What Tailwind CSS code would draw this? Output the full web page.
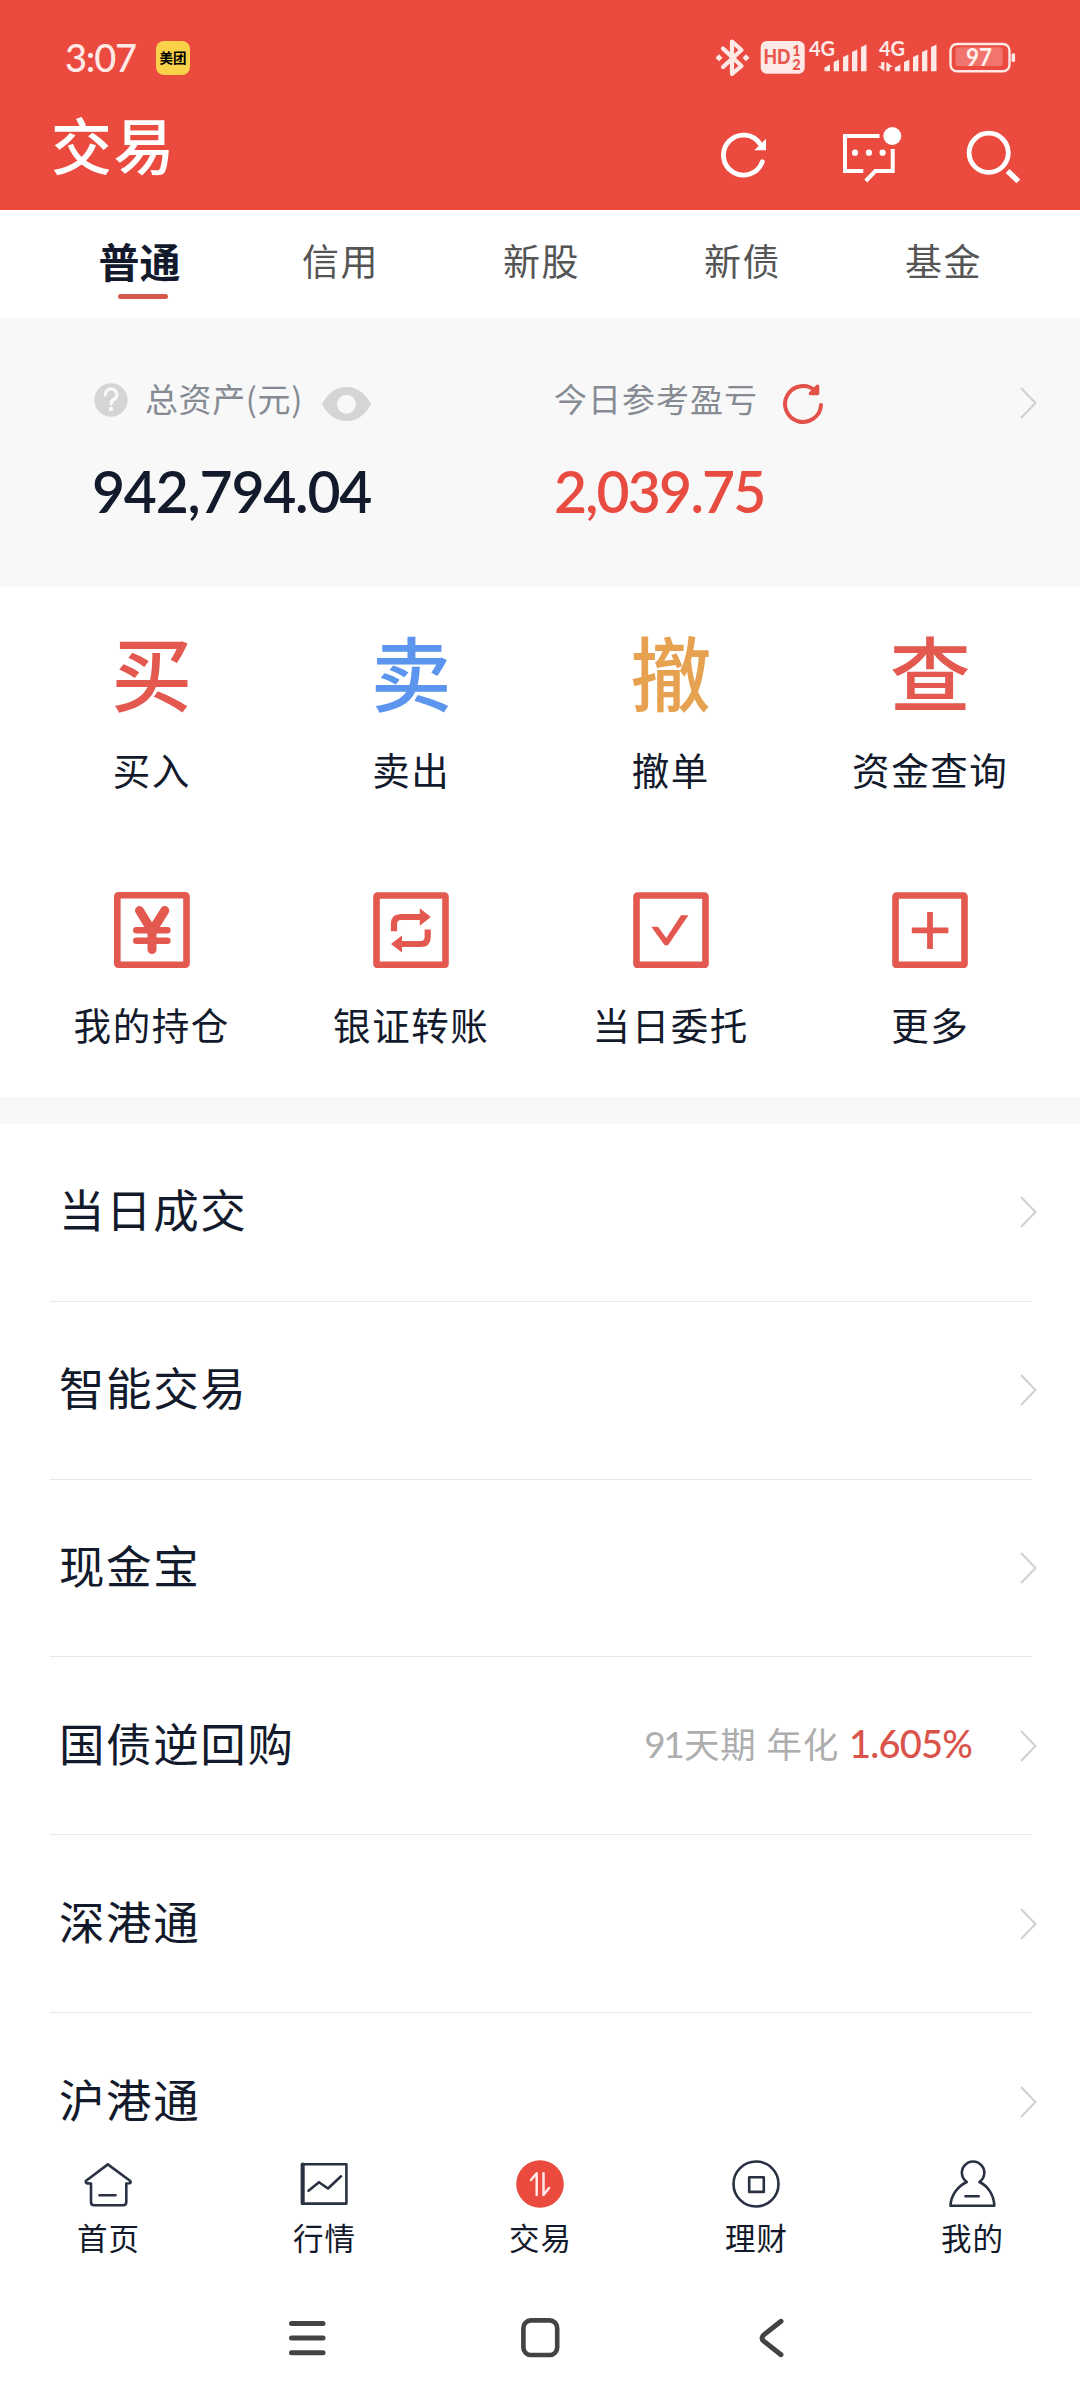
<!DOCTYPE html>
<html lang="zh-CN">
<head>
<meta charset="utf-8">
<title>交易</title>
<script src="https://cdn.jsdelivr.net/npm/@tailwindcss/browser@4"></script>
</head>
<body class="w-[1080px] h-[2400px] overflow-hidden bg-white text-[#121a2b] font-['Noto_Sans_CJK_SC',sans-serif] flex flex-col">

<header class="h-[210px] shrink-0 bg-[#eb4a3f] text-white flex flex-col">
  <!-- status bar -->
  <div class="h-[100px] shrink-0 flex">
    <div class="w-[156px] pl-[65px] pt-[37px] text-[38px] leading-[40px] font-[Lato,sans-serif] font-medium tracking-[-1.2px] text-[#fee9e7]">3:07</div>
    <div class="mt-[41px] w-[34px] h-[34px] rounded-[8px] bg-[#f9d24a] text-black text-[13.5px] font-bold flex items-center justify-center leading-none pb-px">美团</div>
    <svg class="ml-[520px] w-[370px] h-[100px] shrink-0" viewBox="710 0 370 100" fill="none">
      <g stroke="#fee9e7" stroke-width="4.2" stroke-linejoin="round" stroke-linecap="round">
        <path d="M723 48.5 L741.5 66 L732 74 V41.5 L741.5 50 L723 67"/>
      </g>
      <g fill="#fee9e7">
        <path d="M719 54.3 l3.5 3.5 l-3.5 3.5 l-3.5 -3.5z M746 54.3 l3.5 3.5 l-3.5 3.5 l-3.5 -3.5z"/>
        <rect x="760.7" y="41" width="44" height="32.8" rx="6"/>
        <path d="M824.5 71.3 V67.5 L830 64.5 V71.3z M833.7 71.3 V62 L839 59.5 V71.3z M843 71.3 V57 L848.3 54.5 V71.3z M852 71.3 V52 L857.3 49.5 V71.3z M861 71.3 V47 L866.5 44.5 V71.3z"/>
        <path d="M894.9 71.3 V67.5 L900.4 64.5 V71.3z M904 71.3 V62 L909.3 59.5 V71.3z M913 71.3 V57 L918.3 54.5 V71.3z M922 71.3 V52 L927.3 49.5 V71.3z M931 71.3 V47 L936.5 44.5 V71.3z"/>
        <path d="M881.2 62 h3.2 v9.3 l-6.6 -5 h3.4z M886.4 71.3 v-9.3 l6.6 5 h-3.4 v4.3z"/>
        <rect x="1011.5" y="53.3" width="3.6" height="8.6" rx="1.5"/>
      </g>
      <rect x="950.5" y="44" width="59" height="27.2" rx="6.5" stroke="#fee9e7" stroke-width="2.4"/>
      <rect x="955.6" y="47.3" width="47" height="18.8" rx="2.5" fill="#f1746d"/>
      <g font-family="Lato, sans-serif" font-weight="700">
        <text x="763.5" y="64" font-size="20.5" font-weight="900" textLength="27" lengthAdjust="spacingAndGlyphs" fill="#e9564c">HD</text>
        <text x="792.3" y="55.6" font-size="14.5" font-weight="900" fill="#e9564c">1</text>
        <text x="792.3" y="70" font-size="14.5" font-weight="900" fill="#e9564c">2</text>
        <text x="809" y="56" font-size="20.5" textLength="26" lengthAdjust="spacingAndGlyphs" fill="#fee9e7">4G</text>
        <text x="879" y="56" font-size="20.5" textLength="26" lengthAdjust="spacingAndGlyphs" fill="#fee9e7">4G</text>
        <text x="966" y="66" font-size="24" textLength="26" lengthAdjust="spacingAndGlyphs" fill="#fff0ee">97</text>
      </g>
    </svg>
  </div>
  <!-- title bar -->
  <div class="h-[110px] flex">
    <h1 class="w-[710px] pl-[51px] pt-[9px] text-[61px] leading-[70px] tracking-[1.5px] font-medium">交易</h1>
    <svg class="w-[370px] h-[110px] shrink-0" viewBox="710 100 370 110" fill="none" stroke="#fff">
      <path d="M762.3 161.8 A20 20 0 1 1 760.3 144.3" stroke-width="4.8" stroke-linecap="round"/>
      <path d="M766 138.8 V150.3 H754.3z" fill="#fff" stroke="none"/>
      <path d="M879.5 136 H845 V171 H863.3 M892.7 149 V171 H875.3 L865.8 181" stroke-width="4"/>
      <g fill="#fff" stroke="none">
        <circle cx="855" cy="152.7" r="3.1"/><circle cx="868.9" cy="152.7" r="3.1"/><circle cx="882.6" cy="152.7" r="3.1"/>
        <circle cx="892.3" cy="136" r="9"/>
      </g>
      <circle cx="988.7" cy="152.8" r="19.6" stroke-width="4.8"/>
      <path d="M1007.6 171 L1018.4 181.4" stroke-width="5.4"/>
    </svg>
  </div>
</header>

<!-- account type tabs -->
<nav class="h-[108px] shrink-0 pl-[39px] flex text-[37px] leading-[56px] text-[#555] text-center">
  <div class="w-[201px] pt-[22px] text-[41px] font-bold text-[#121a2b] flex flex-col items-center">普通<span class="w-[50px] h-[5px] mt-[6px] ml-[7px] rounded-full bg-[#d4584c]"></span></div>
  <div class="w-[201px] pt-[22px] tracking-[1.6px]">信用</div>
  <div class="w-[201px] pt-[22px] tracking-[1.6px]">新股</div>
  <div class="w-[201px] pt-[22px] tracking-[1.6px]">新债</div>
  <div class="w-[201px] pt-[22px] tracking-[1.6px]">基金</div>
</nav>

<!-- asset summary -->
<section class="h-[269px] shrink-0 bg-[#f8f8f8] flex pt-[56px]">
  <div class="w-[460px] pl-[94px]">
    <div class="flex items-center h-[52px]">
      <svg class="w-[34px] h-[34px]" viewBox="94 383 34 34"><circle cx="111" cy="400" r="16.7" fill="#d5d5d5"/><path d="M105.3 394.8 A5.8 5.6 0 1 1 113.6 399.6 Q111 401 111 403.8" fill="none" stroke="#f8f8f8" stroke-width="3.4" stroke-linecap="round"/><circle cx="111" cy="409" r="2.3" fill="#f8f8f8"/></svg>
      <span class="ml-[17px] -mt-[4px] w-[177px] text-[33px] leading-[50px] tracking-[0.6px] text-[#868b93] whitespace-nowrap">总资产(元)</span>
      <svg class="mt-[8px] w-[49px] h-[35px] shrink-0" viewBox="322 387 49 35"><path fill-rule="evenodd" fill="#d5d5d5" d="M322 404.2 Q331 387 346.5 387 Q362 387 371 404.2 Q362 421 346.5 421 Q331 421 322 404.2z M356 404.3 a9.5 9.5 0 1 0 -19 0 a9.5 9.5 0 1 0 19 0z"/></svg>
    </div>
    <div class="mt-[30px] -ml-[2px] text-[57px] leading-[70px] font-[Lato,sans-serif] font-semibold tracking-[-1.2px]">942,794.04</div>
  </div>
  <div class="w-[560px] pl-[94px]">
    <div class="flex items-center h-[52px]">
      <span class="w-[227px] -mt-[4px] text-[33px] leading-[50px] tracking-[1px] text-[#868b93] whitespace-nowrap">今日参考盈亏</span>
      <svg class="mt-[6px] w-[44px] h-[44px] shrink-0" viewBox="781 381 44 44" fill="none" stroke="#e2524a" stroke-linecap="round" stroke-linejoin="round"><path d="M821 405 A18 18 0 1 1 815.5 391" stroke-width="4"/><path d="M817.5 386.3 V393.5 H810.5z" stroke-width="3.6" fill="#e2524a"/></svg>
    </div>
    <div class="mt-[30px] text-[57px] leading-[70px] font-[Lato,sans-serif] font-semibold tracking-[-1.8px] text-[#e84c41]">2,039.75</div>
  </div>
  <svg class="mt-[13px] w-[18px] h-[32px]" viewBox="0 0 18 32" fill="none" stroke="#d0d0d0" stroke-width="2"><path d="M1 1 L15.5 16 L1 31"/></svg>
</section>

<!-- quick actions -->
<section class="h-[510px] shrink-0 pl-[22px] pr-[20px] grid grid-cols-4 grid-rows-[255px_255px] text-center text-[37.5px] leading-[50px]">
  <div><div class="h-[154px] pt-[36px] text-[81px] leading-[94px] font-medium text-[#e3584f]">买</div><div class="pt-[3px] tracking-[1.6px]">买入</div></div>
  <div><div class="h-[154px] pt-[36px] text-[81px] leading-[94px] font-medium text-[#5b95ee]">卖</div><div class="pt-[3px] tracking-[1.6px]">卖出</div></div>
  <div><div class="h-[154px] pt-[36px] text-[81px] leading-[94px] font-medium text-[#e6a250]">撤</div><div class="pt-[3px] tracking-[1.6px]">撤单</div></div>
  <div><div class="h-[154px] pt-[36px] text-[81px] leading-[94px] font-medium text-[#e3584f]">查</div><div class="pt-[3px] tracking-[1.6px]">资金查询</div></div>
  <div class="flex flex-col items-center pt-[50px]">
    <svg class="w-[76px] h-[76px]" viewBox="114 892 76 76" fill="none" stroke="#e3584f" stroke-linecap="round"><rect x="117.3" y="895.3" width="69.2" height="69.4" rx="1" stroke-width="6.6"/><path d="M139.5 910.5 L152 931 L164.8 910.5 M152 930 V949.5" stroke-width="9" stroke-linejoin="round"/><path d="M136.3 930.3 H167.3 M136.3 940.7 H167.3" stroke-width="6.6"/></svg>
    <div class="mt-[31px] tracking-[1.6px]">我的持仓</div>
  </div>
  <div class="flex flex-col items-center pt-[50px]">
    <svg class="w-[76px] h-[76px]" viewBox="373 892 76 76" fill="none" stroke="#e3584f"><rect x="376.5" y="895.5" width="69" height="69.4" rx="1" stroke-width="6.6"/><path d="M394 931.3 V924 Q394 917 401 917 H421 M427.7 929.5 V937 Q427.7 944 420.7 944 H401" stroke-width="6.2"/><path d="M419.8 908.3 L430.8 917 L419.8 925.7z M402 935.6 L391 944 L402 952.4z" fill="#e3584f" stroke="none"/></svg>
    <div class="mt-[31px] tracking-[1.6px]">银证转账</div>
  </div>
  <div class="flex flex-col items-center pt-[50px]">
    <svg class="w-[76px] h-[76px]" viewBox="632.5 892 76 76" fill="none" stroke="#e3584f"><rect x="636" y="895.5" width="69" height="69.4" rx="1" stroke-width="6.6"/><path d="M650.8 926.8 H657.5 L665.8 938 L680.5 915.2 H688 L668 944.6 Q665.8 946.5 663.6 944.6z" fill="#e3584f" stroke="none"/></svg>
    <div class="mt-[31px] tracking-[1.6px]">当日委托</div>
  </div>
  <div class="flex flex-col items-center pt-[50px]">
    <svg class="w-[76px] h-[76px]" viewBox="892.5 892 76 76" fill="none" stroke="#e3584f"><rect x="896" y="895.5" width="69" height="69.4" rx="1" stroke-width="6.6"/><path d="M912.3 930.4 H948.9 M930.5 912 V949" stroke-width="5.8"/></svg>
    <div class="mt-[31px] tracking-[1.6px]">更多</div>
  </div>
</section>

<div class="h-[27px] shrink-0 bg-[#f7f7f7]"></div>

<!-- service list -->
<main class="h-[1016px] shrink-0 overflow-hidden pl-[50px] pr-[48px] text-[45.5px] leading-[60px] tracking-[1.6px]">
  <div class="h-[177.8px] border-b border-[#e9e9e9] flex items-center pl-[9px]"><span class="flex-1 -mt-[8px]">当日成交</span><svg class="-mr-[6px] w-[18px] h-[32px]" viewBox="0 0 18 32" fill="none" stroke="#d0d0d0" stroke-width="2"><path d="M1 1 L15.5 16 L1 31"/></svg></div>
  <div class="h-[177.8px] border-b border-[#e9e9e9] flex items-center pl-[9px]"><span class="flex-1 -mt-[8px]">智能交易</span><svg class="-mr-[6px] w-[18px] h-[32px]" viewBox="0 0 18 32" fill="none" stroke="#d0d0d0" stroke-width="2"><path d="M1 1 L15.5 16 L1 31"/></svg></div>
  <div class="h-[177.8px] border-b border-[#e9e9e9] flex items-center pl-[9px]"><span class="flex-1 -mt-[8px]">现金宝</span><svg class="-mr-[6px] w-[18px] h-[32px]" viewBox="0 0 18 32" fill="none" stroke="#d0d0d0" stroke-width="2"><path d="M1 1 L15.5 16 L1 31"/></svg></div>
  <div class="h-[177.8px] border-b border-[#e9e9e9] flex items-center pl-[9px]"><span class="flex-1 -mt-[8px]">国债逆回购</span><span class="mr-[48px] -mt-[4px] text-[35.5px] tracking-[0.8px] text-[#aeaeae] font-[Lato,'Noto_Sans_CJK_SC',sans-serif] whitespace-pre"><span class="text-[37px] tracking-[-2.6px] mr-[2px]">91</span>天期 年化 <span class="text-[38px] tracking-[-0.8px] font-medium text-[#d9534a]">1.605%</span></span><svg class="-mr-[6px] w-[18px] h-[32px]" viewBox="0 0 18 32" fill="none" stroke="#d0d0d0" stroke-width="2"><path d="M1 1 L15.5 16 L1 31"/></svg></div>
  <div class="h-[177.8px] border-b border-[#e9e9e9] flex items-center pl-[9px]"><span class="flex-1 -mt-[8px]">深港通</span><svg class="-mr-[6px] w-[18px] h-[32px]" viewBox="0 0 18 32" fill="none" stroke="#d0d0d0" stroke-width="2"><path d="M1 1 L15.5 16 L1 31"/></svg></div>
  <div class="h-[177.8px] flex items-center pl-[9px]"><span class="flex-1 -mt-[8px]">沪港通</span><svg class="-mr-[6px] w-[18px] h-[32px]" viewBox="0 0 18 32" fill="none" stroke="#d0d0d0" stroke-width="2"><path d="M1 1 L15.5 16 L1 31"/></svg></div>
</main>

<!-- bottom tabs -->
<nav class="h-[130px] shrink-0 bg-white grid grid-cols-5 text-center text-[30.5px] leading-[40px]">
  <div class="flex flex-col items-center pt-[14px]">
    <svg class="w-[60px] h-[60px]" viewBox="78 2154 60 60" fill="none" stroke="#2a3142" stroke-width="2.6" stroke-linejoin="round" stroke-linecap="round"><path d="M107.8 2164.4 L85.8 2181 Q85.5 2183.6 88 2183.3 L91 2183.5 V2202 Q91 2205.2 94 2205.2 H123 Q126.3 2205.2 126.3 2202 V2183.5 L129 2183.3 Q131.5 2183 130.3 2181z M99.5 2195.2 H115.5"/></svg>
    <div class="mt-[3px] ml-[1px] tracking-[1px]">首页</div>
  </div>
  <div class="flex flex-col items-center pt-[14px]">
    <svg class="w-[60px] h-[60px]" viewBox="294 2154 60 60" fill="none" stroke="#2a3142" stroke-width="2.6" stroke-linejoin="round" stroke-linecap="round"><rect x="302" y="2164.2" width="44.4" height="39.4"/><path d="M302.8 2164.5 V2203.3" stroke-width="3.8"/><path d="M308.5 2190.8 L319 2182.2 L328 2188.5 L341 2176.3"/></svg>
    <div class="mt-[3px] ml-[1px] tracking-[1px]">行情</div>
  </div>
  <div class="flex flex-col items-center pt-[14px]">
    <svg class="w-[60px] h-[60px]" viewBox="510 2154 60 60" fill="none" stroke="#ffe9e6" stroke-width="2.5" stroke-linejoin="round" stroke-linecap="round"><circle cx="540" cy="2184" r="23.8" fill="#eb4a3f" stroke="none"/><path d="M531 2180 L536.7 2173.3 V2195 M543.5 2173.3 V2195 L549 2188"/></svg>
    <div class="mt-[3px] ml-[1px] tracking-[1px]">交易</div>
  </div>
  <div class="flex flex-col items-center pt-[14px]">
    <svg class="w-[60px] h-[60px]" viewBox="726 2154 60 60" fill="none" stroke="#2a3142" stroke-width="2.6" stroke-linejoin="round"><circle cx="756" cy="2184" r="22.5"/><rect x="749.2" y="2177.3" width="14.6" height="14.6"/></svg>
    <div class="mt-[3px] ml-[1px] tracking-[1px]">理财</div>
  </div>
  <div class="flex flex-col items-center pt-[14px]">
    <svg class="w-[60px] h-[60px]" viewBox="942 2154 60 60" fill="none" stroke="#2a3142" stroke-width="2.6" stroke-linejoin="round" stroke-linecap="round"><path d="M966.8 2182 A11.2 11.2 0 1 1 979.4 2182 C988 2186 994 2195 994.3 2205.7 H950.5 C951 2195 958 2186 966.8 2182z M965.5 2196.2 H978.7"/></svg>
    <div class="mt-[3px] ml-[1px] tracking-[1px]">我的</div>
  </div>
</nav>

<!-- system navigation -->
<footer class="h-[130px] shrink-0 bg-white flex justify-center items-start pt-[43px] gap-[187px]">
  <svg class="w-[50px] h-[50px]" viewBox="282 2313 50 50" stroke="#434343" stroke-width="5" stroke-linecap="round"><path d="M291.5 2323.4 H323 M291.5 2338 H323 M291.5 2352.7 H323"/></svg>
  <svg class="w-[42px] h-[50px]" viewBox="519 2313 42 50" fill="none" stroke="#434343" stroke-width="4.6"><rect x="523.4" y="2320.4" width="33.8" height="34.6" rx="7.5"/></svg>
  <svg class="w-[50px] h-[50px]" viewBox="748 2313 50 50" fill="none" stroke="#434343" stroke-width="5" stroke-linecap="round"><path d="M781 2321.3 L763.8 2334.8 Q760.2 2338 763.8 2341.2 L781 2354.7"/></svg>
</footer>
</body>
</html>
